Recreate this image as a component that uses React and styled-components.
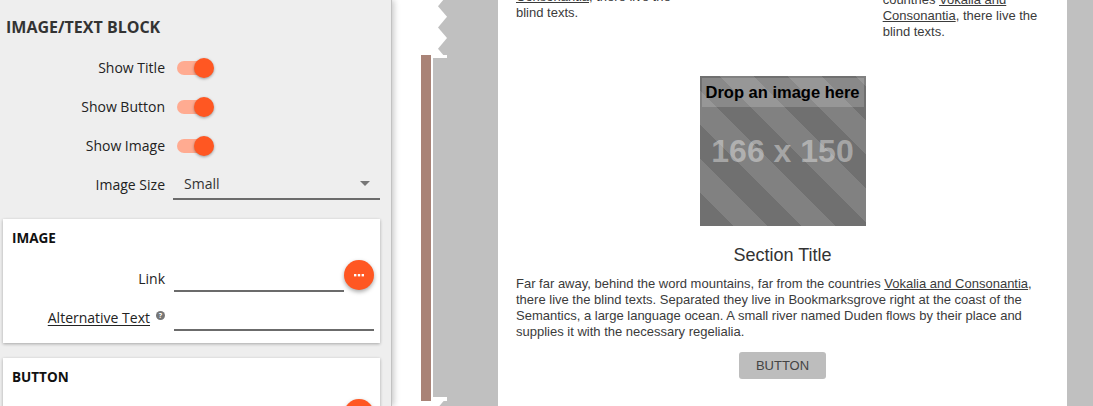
import React from "react";
import styled, { createGlobalStyle } from "styled-components";

const GlobalStyle = createGlobalStyle`
  html, body {
    margin: 0;
    padding: 0;
  }
  body {
    width: 1093px;
    height: 406px;
    overflow: hidden;
    background: #ffffff;
  }
`;

const Layout = styled.div`
  display: flex;
  width: 1093px;
  height: 406px;
  overflow: hidden;
`;

/* ---------- sidebar ---------- */

const Sidebar = styled.aside`
  position: relative;
  z-index: 1;
  width: 392px;
  flex-shrink: 0;
  box-sizing: border-box;
  padding: 0 11px 0 3px;
  background: #eeeeee;
  border-right: 1px solid #c2c2c2;
  box-shadow: 2px 0 6px rgba(0, 0, 0, 0.22);
  font-family: "Open Sans", "Noto Sans", sans-serif;
  color: #222;
  overflow: hidden;
`;

const PanelTitle = styled.h2`
  margin: 0;
  padding: 16px 0 0 3px;
  font-size: 16px;
  line-height: 22px;
  font-weight: 700;
  color: #333;
`;

const SettingsList = styled.div`
  display: flex;
  flex-direction: column;
  margin: 10px 0 15px;
`;

const Row = styled.div`
  display: grid;
  grid-template-columns: 162px 1fr;
  column-gap: ${(p) => p.gap || 8}px;
  align-items: center;
  height: ${(p) => p.h || 39}px;
`;

const Label = styled.label`
  display: flex;
  align-items: center;
  justify-content: flex-end;
  gap: 6px;
  font-size: 14px;
  color: #222;
  padding-top: ${(p) => p.shift || 0}px;
`;

const LabelText = styled.span`
  text-decoration: ${(p) => (p.underline ? "underline" : "none")};
  text-underline-offset: 2px;
`;

const Help = styled.span`
  display: inline-flex;
  align-items: center;
  justify-content: center;
  width: 9px;
  height: 9px;
  border-radius: 50%;
  background: #767676;
  color: #fff;
  font-size: 7px;
  font-weight: 700;
  line-height: 1;
  margin-top: -4px;
`;

const Toggle = styled.span`
  position: relative;
  display: block;
  width: 34px;
  height: 14px;
  margin-left: 4px;
  border-radius: 7px;
  background: ${(p) => (p.on ? "#ffab91" : "#bdbdbd")};

  &::after {
    content: "";
    position: absolute;
    top: -3px;
    left: ${(p) => (p.on ? "17px" : "-3px")};
    width: 20px;
    height: 20px;
    border-radius: 50%;
    background: ${(p) => (p.on ? "#ff5722" : "#fafafa")};
    box-shadow: 0 1px 3px rgba(0, 0, 0, 0.35);
  }
`;

const Select = styled.div`
  display: flex;
  align-items: center;
  justify-content: space-between;
  height: 29px;
  box-sizing: border-box;
  padding: 0 10px 2px 11px;
  border-bottom: 2px solid #6b6b6b;
  font-size: 14px;
  color: #333;
  margin-top: 1px;
`;

const Caret = styled.span`
  width: 0;
  height: 0;
  border-left: 5px solid transparent;
  border-right: 5px solid transparent;
  border-top: 5px solid #777;
`;

const Card = styled.section`
  background: #ffffff;
  box-shadow: 0 1px 3px rgba(0, 0, 0, 0.3);
  padding: 10px 6px 12px 0;
  margin-bottom: 15px;
`;

const CardTitle = styled.h3`
  margin: 0 0 14px 9px;
  font-size: 13.5px;
  line-height: 18px;
  font-weight: 700;
  color: #111;
`;

const FieldGroup = styled.div`
  display: flex;
  flex-direction: column;
  gap: 8px;
`;

const Field = styled.div`
  display: flex;
  align-items: center;
`;

const Input = styled.div`
  flex: 1;
  height: 31px;
  box-sizing: border-box;
  border-bottom: 2px solid #6b6b6b;
`;

const RoundButton = styled.button`
  display: flex;
  align-items: center;
  justify-content: center;
  width: 30px;
  height: 30px;
  padding: 0;
  margin-top: -3px;
  border: none;
  border-radius: 50%;
  background: #ff5722;
  box-shadow: 0 2px 4px rgba(0, 0, 0, 0.35);
  flex-shrink: 0;
`;

const Dots = () => (
  <svg width="10" height="3" viewBox="0 0 10 3">
    <rect x="0" y="0" width="2.4" height="2.4" fill="#fff" />
    <rect x="3.8" y="0" width="2.4" height="2.4" fill="#fff" />
    <rect x="7.6" y="0" width="2.4" height="2.4" fill="#fff" />
  </svg>
);

/* ---------- canvas ---------- */

const Canvas = styled.main`
  flex: 1;
  display: flex;
  flex-direction: column;
  background: #ffffff;
  overflow: hidden;
  font-family: "Liberation Sans", Arial, sans-serif;
  color: #3b3b3b;
`;

const BlockRow = styled.div`
  display: flex;
  height: ${(p) => p.h}px;
  flex-shrink: 0;
`;

const Gutter = styled.div`
  width: 41px;
  flex-shrink: 0;
  display: flex;
  justify-content: flex-end;
  padding-right: 2px;
  box-sizing: border-box;
`;

const SelectBar = styled.div`
  width: 10px;
  background: #a98377;
`;

const Edge = styled.div`
  width: 14px;
  flex-shrink: 0;
  background: ${(p) => (p.solid ? "#c0c0c0" : "transparent")};
  margin: ${(p) => (p.solid ? "3px 0 4px" : "0")};
`;

const Backdrop = styled.div`
  flex: 1;
  display: flex;
  background: #c0c0c0;
  padding: 0 26px 0 51px;
`;

const Page = styled.div`
  width: 569px;
  box-sizing: border-box;
  padding: 0 18px;
  background: #ffffff;
  overflow: hidden;
  display: flex;
  flex-direction: column;
  justify-content: ${(p) => (p.anchorBottom ? "flex-end" : "flex-start")};
`;

const Columns = styled.div`
  display: grid;
  grid-template-columns: repeat(3, 1fr);
  column-gap: 17px;
  align-items: end;
  flex-shrink: 0;
`;

const ColumnText = styled.p`
  margin: 0;
  padding-bottom: ${(p) => p.pb}px;
  font-size: 13px;
  line-height: 16px;
`;

const TextLink = styled.a`
  color: inherit;
  text-decoration: underline;
`;

const Feature = styled.div`
  display: flex;
  flex-direction: column;
  align-items: center;
  padding-top: 21px;
`;

const ImageDrop = styled.div`
  position: relative;
  width: 166px;
  height: 150px;
  display: flex;
  align-items: center;
  justify-content: center;
  background: repeating-linear-gradient(
    45deg,
    #707070 0 24px,
    #818181 24px 48px
  );
`;

const DropHint = styled.div`
  position: absolute;
  top: 2px;
  left: 2px;
  right: 2px;
  height: 29px;
  display: flex;
  align-items: center;
  justify-content: center;
  background: rgba(255, 255, 255, 0.18);
  color: #000;
  font-size: 16.5px;
  font-weight: 700;
`;

const Dimensions = styled.span`
  font-size: 32px;
  font-weight: 700;
  color: rgba(255, 255, 255, 0.38);
`;

const SectionTitle = styled.h4`
  margin: 19px 0 11px;
  font-size: 18px;
  line-height: 20px;
  font-weight: 400;
  color: #333;
`;

const Body = styled.p`
  align-self: stretch;
  margin: 0;
  font-size: 13px;
  line-height: 16px;
`;

const PlainButton = styled.button`
  margin-top: 12px;
  width: 87px;
  height: 27px;
  border: none;
  border-radius: 3px;
  background: #bdbdbd;
  color: #444;
  font-family: inherit;
  font-size: 13px;
`;

const Zigzag = ({ height, offset = 0 }) => {
  const period = 21.3;
  const teeth = [];
  for (let y = offset - period; y < height + period; y += period) {
    teeth.push(`14,${y} 5,${y + period / 2} 14,${y + period}`);
  }
  return (
    <svg width="14" height={height} viewBox={`0 0 14 ${height}`}>
      <rect x="0" y="0" width="14" height={height} fill="#fff" />
      {teeth.map((t, i) => (
        <polygon key={i} points={t} fill="#c0c0c0" />
      ))}
    </svg>
  );
};

const paragraph =
  "Far far away, behind the word mountains, far from the countries ";

export default function App() {
  return (
    <>
      <GlobalStyle />
      <Layout>
        <Sidebar>
          <PanelTitle>IMAGE/TEXT BLOCK</PanelTitle>
          <SettingsList>
            <Row gap={8}>
              <Label>Show Title</Label>
              <Toggle on />
            </Row>
            <Row gap={8}>
              <Label>Show Button</Label>
              <Toggle on />
            </Row>
            <Row gap={8}>
              <Label>Show Image</Label>
              <Toggle on />
            </Row>
            <Row gap={8}>
              <Label>Image Size</Label>
              <Select>
                Small
                <Caret />
              </Select>
            </Row>
          </SettingsList>

          <Card>
            <CardTitle>IMAGE</CardTitle>
            <FieldGroup>
              <Row gap={9} h={31}>
                <Label shift={4}>Link</Label>
                <Field>
                  <Input />
                  <RoundButton>
                    <Dots />
                  </RoundButton>
                </Field>
              </Row>
              <Row gap={9} h={31}>
                <Label shift={4}>
                  <LabelText underline>Alternative Text</LabelText>
                  <Help>?</Help>
                </Label>
                <Input />
              </Row>
            </FieldGroup>
          </Card>

          <Card>
            <CardTitle>BUTTON</CardTitle>
            <FieldGroup>
              <Row gap={9} h={31}>
                <Label shift={4}>Link</Label>
                <Field>
                  <Input />
                  <RoundButton>
                    <Dots />
                  </RoundButton>
                </Field>
              </Row>
            </FieldGroup>
          </Card>
        </Sidebar>

        <Canvas>
          <BlockRow h={55}>
            <Gutter />
            <Edge>
              <Zigzag height={55} offset={-4.5} />
            </Edge>
            <Backdrop>
              <Page anchorBottom>
                <Columns>
                  <ColumnText pb={34}>
                    {paragraph}
                    <TextLink>Vokalia and Consonantia</TextLink>, there live
                    the blind texts.
                  </ColumnText>
                  <ColumnText pb={120}>
                    Far far away, behind the word mountains.
                  </ColumnText>
                  <ColumnText pb={15}>
                    {paragraph}
                    <TextLink>Vokalia and Consonantia</TextLink>, there live
                    the blind texts.
                  </ColumnText>
                </Columns>
              </Page>
            </Backdrop>
          </BlockRow>

          <BlockRow h={346}>
            <Gutter>
              <SelectBar />
            </Gutter>
            <Edge solid />
            <Backdrop>
              <Page>
                <Feature>
                  <ImageDrop>
                    <DropHint>Drop an image here</DropHint>
                    <Dimensions>166 x 150</Dimensions>
                  </ImageDrop>
                  <SectionTitle>Section Title</SectionTitle>
                  <Body>
                    {paragraph}
                    <TextLink>Vokalia and Consonantia</TextLink>, there live
                    the blind texts. Separated they live in Bookmarksgrove
                    right at the coast of the Semantics, a large language
                    ocean. A small river named Duden flows by their place and
                    supplies it with the necessary regelialia.
                  </Body>
                  <PlainButton>BUTTON</PlainButton>
                </Feature>
              </Page>
            </Backdrop>
          </BlockRow>

          <BlockRow h={40}>
            <Gutter />
            <Edge>
              <Zigzag height={40} offset={-4} />
            </Edge>
            <Backdrop>
              <Page />
            </Backdrop>
          </BlockRow>
        </Canvas>
      </Layout>
    </>
  );
}
